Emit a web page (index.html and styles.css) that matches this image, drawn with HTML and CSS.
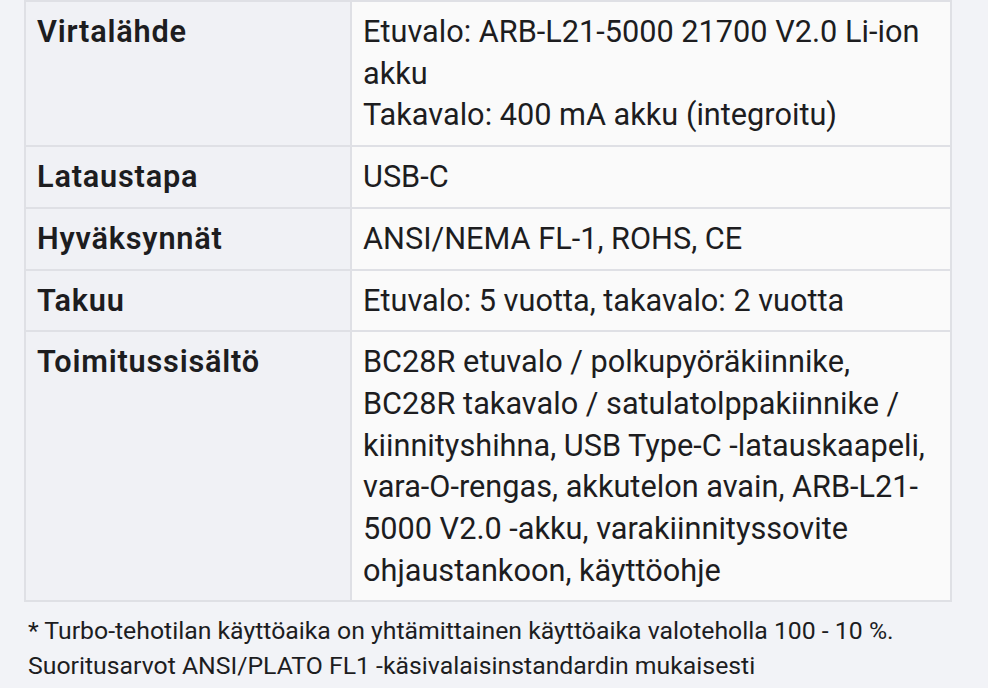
FILE: index.html
```html
<!DOCTYPE html>
<html lang="fi">
<head>
<meta charset="utf-8">
<title>Tekniset tiedot</title>
<link rel="stylesheet" href="styles.css">
</head>
<body>
<div class="page">
  <table class="specs">
    <colgroup><col class="col-label"><col class="col-value"></colgroup>
    <tbody>
      <tr><th>Virtalähde</th><td>Etuvalo: ARB-L21-5000 21700 V2.0 Li-ion akku<br>Takavalo: 400 mA akku (integroitu)</td></tr>
      <tr><th>Lataustapa</th><td>USB-C</td></tr>
      <tr><th>Hyväksynnät</th><td>ANSI/NEMA FL-1, ROHS, CE</td></tr>
      <tr><th>Takuu</th><td>Etuvalo: 5 vuotta, takavalo: 2 vuotta</td></tr>
      <tr><th>Toimitussisältö</th><td>BC28R etuvalo / polkupyöräkiinnike, BC28R takavalo / satulatolppakiinnike / kiinnityshihna, USB Type-C -latauskaapeli, vara-O-rengas, akkutelon avain, ARB-L21-5000 V2.0 -akku, varakiinnityssovite ohjaustankoon, käyttöohje</td></tr>
    </tbody>
  </table>
  <div class="notes">
    <p>* Turbo-tehotilan käyttöaika on yhtämittainen käyttöaika valoteholla 100 - 10 %.</p>
    <p>Suoritusarvot ANSI/PLATO FL1 -käsivalaisinstandardin mukaisesti</p>
  </div>
</div>
</body>
</html>
```
FILE: styles.css
```css
html, body {
  margin: 0;
  padding: 0;
  background: #f2f3f7;
}
body {
  font-family: Roboto, "Noto Sans", sans-serif;
  color: #1d1d1f;
}
.page {
  padding: 0 36px 0 24px;
}
.specs {
  width: 928px;
  margin-top: 0;
  table-layout: fixed;
  border-collapse: collapse;
  border: 2px solid #dfe0e5;
  font-size: 30.7px;
  line-height: 41.7px;
}
.col-label { width: 326px; }
.specs th,
.specs td {
  border: 2px solid #dfe0e5;
  padding: 9px 11px 9px 11px;
  text-align: left;
  vertical-align: top;
}
.specs th {
  background: #f0f1f5;
  font-weight: 600;
  letter-spacing: 0.8px;
}
.specs td {
  background: #fafafa;
  font-weight: 400;
}
.notes {
  padding: 11px 4px 0 4px;
  font-size: 24.8px;
  line-height: 35px;
}
.notes p {
  margin: 0;
}
```
